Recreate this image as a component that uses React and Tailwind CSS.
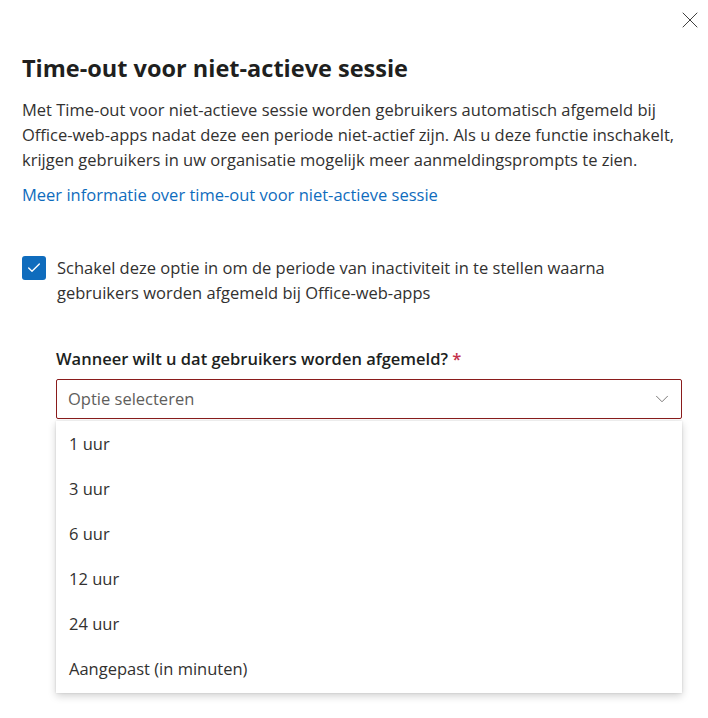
import { X, ChevronDown, Check } from "lucide-react";

const options = ["1 uur", "3 uur", "6 uur", "12 uur", "24 uur", "Aangepast (in minuten)"];

const App = () => {
    return (
        <div className="w-[708px] h-[718px] bg-white font-['Open_Sans',sans-serif] text-[#323130] relative overflow-hidden">
            {/* close button */}
            <div className="flex justify-end pt-[6px] pr-[4px]">
                <button className="w-[28px] h-[28px] flex items-center justify-center text-[#323130]">
                    <X size={28} strokeWidth={0.8} />
                </button>
            </div>

            <div className="pl-[22px] pr-[10px]">
                <h1 className="mt-[19px] text-[23.5px] leading-[30px] font-bold text-[#201f1e]">
                    Time-out voor niet-actieve sessie
                </h1>

                <p className="mt-[14px] text-[16.5px] leading-[25px] whitespace-nowrap">
                    Met Time-out voor niet-actieve sessie worden gebruikers automatisch afgemeld bij
                    <br />
                    Office-web-apps nadat deze een periode niet-actief zijn. Als u deze functie inschakelt,
                    <br />
                    krijgen gebruikers in uw organisatie mogelijk meer aanmeldingsprompts te zien.
                </p>

                <a className="block mt-[10px] text-[16.5px] leading-[25px] text-[#0f6cbd]">
                    Meer informatie over time-out voor niet-actieve sessie
                </a>

                {/* checkbox */}
                <div className="mt-[48px] flex gap-[11px]">
                    <div className="mt-[1px] w-[24px] h-[24px] shrink-0 rounded-[3px] bg-[#0f6cbd] flex items-center justify-center">
                        <Check size={16} strokeWidth={2} className="text-white" />
                    </div>
                    <div className="text-[16.5px] leading-[25px] whitespace-nowrap">
                        Schakel deze optie in om de periode van inactiviteit in te stellen waarna
                        <br />
                        gebruikers worden afgemeld bij Office-web-apps
                    </div>
                </div>

                {/* select */}
                <div className="ml-[34px] mt-[42px] w-[626px]">
                    <div className="text-[16.5px] leading-[24px] font-semibold text-[#201f1e]">
                        Wanneer wilt u dat gebruikers worden afgemeld? <span className="text-[#c4314b]">*</span>
                    </div>
                    <div className="mt-[8px] h-[40px] border border-[#8a1c1c] rounded-[2px] flex items-center justify-between pl-[11px] pr-[8px]">
                        <span className="text-[16.5px] text-[#605e5c]">Optie selecteren</span>
                        <ChevronDown size={22} strokeWidth={0.9} className="text-[#605e5c]" />
                    </div>
                    <ul className="mt-[2px] bg-white shadow-[0_3px_8px_rgba(0,0,0,0.18),0_0_2px_rgba(0,0,0,0.12)] py-[1px]">
                        {options.map((o) => (
                            <li key={o} className="h-[45px] flex items-center pl-[13px] text-[16.5px] text-[#323130]">
                                {o}
                            </li>
                        ))}
                    </ul>
                </div>
            </div>
        </div>
    );
};

export default App;
